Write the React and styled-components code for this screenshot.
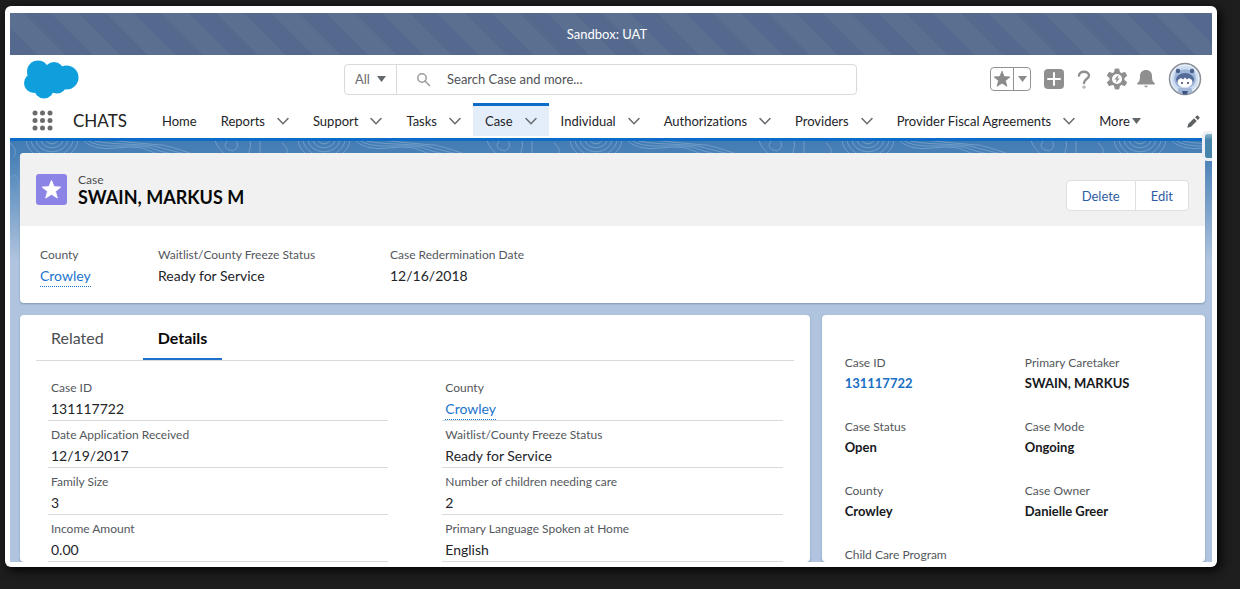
import React from "react";
import styled, { createGlobalStyle, css } from "styled-components";

const GlobalStyle = createGlobalStyle`
  *, *::before, *::after { box-sizing: border-box; }
  body {
    margin: 0;
    background: #1e1e1e;
    color: #16181c;
    font-family: Lato, "Noto Sans", sans-serif;
    font-size: 13px;
    font-variant-ligatures: none;
    line-height: 20px;
  }
  button, input { font: inherit; }
  h1, dl, dd, dt { margin: 0; }
  a { text-decoration: none; }
`;

const Desktop = styled.div`
  height: 100vh;
  padding: 6px 23px 22px 5px;
`;

const Frame = styled.div`
  height: 100%;
  padding: 7px 5px 5px;
  background: #fff;
  border-radius: 6px;
  box-shadow: 3px 3px 12px #000;
`;

const Screen = styled.div`
  position: relative;
  height: 100%;
  display: flex;
  flex-direction: column;
  overflow: hidden;
`;

const Banner = styled.div`
  flex: none;
  height: 42px;
  display: flex;
  align-items: center;
  justify-content: center;
  padding-right: 8px;
  color: #fff;
  background: repeating-linear-gradient(45deg, #54698d 0 19px, #5b6f91 20px 39px);
`;

const Header = styled.header`
  flex: none;
  background: #fff;
  border-bottom: 3px solid #0e6bc8;
`;

const TopRow = styled.div`
  height: 48px;
  display: grid;
  grid-template-columns: 334px minmax(0, 513px) 1fr;
  align-items: center;
`;

const Logo = styled.a`
  display: flex;
  padding-left: 14px;
`;

const SearchBox = styled.form`
  height: 31px;
  display: flex;
  border: 1px solid #d8dadd;
  border-radius: 4px;
`;

const ScopeButton = styled.button`
  width: 52px;
  display: flex;
  align-items: center;
  justify-content: center;
  gap: 7px;
  padding: 0;
  border: 0;
  border-right: 1px solid #d8dadd;
  background: none;
  color: #6b6d70;
`;

const SearchField = styled.label`
  flex: 1;
  display: flex;
  align-items: center;
  gap: 16px;
  padding-left: 19px;
`;

const SearchInput = styled.input`
  flex: 1;
  min-width: 0;
  padding: 0;
  border: 0;
  outline: 0;
  background: none;
  &::placeholder { color: #505256; opacity: 1; }
`;

const Tools = styled.div`
  display: flex;
  align-items: center;
  justify-content: flex-end;
`;

const IconButton = styled.button`
  display: flex;
  align-items: center;
  justify-content: center;
  width: ${(p) => p.$w || 31}px;
  height: 34px;
  padding: 0;
  border: 0;
  background: none;
  color: #8f8f8f;
`;

const SplitButton = styled.div`
  display: flex;
  height: 24px;
  margin-right: 7px;
  border: 1px solid #929292;
  border-radius: 4px;
`;

const SplitPart = styled.button`
  width: ${(p) => p.$w}px;
  display: flex;
  align-items: center;
  justify-content: center;
  padding: 0;
  border: 0;
  background: none;
  color: #8a8a8a;
  & + & { border-left: 1px solid #929292; }
`;

const NavRow = styled.nav`
  height: 35px;
  display: flex;
  align-items: stretch;
  padding: 0 10px 0 21px;
`;

const Launcher = styled.button`
  flex: none;
  width: 24px;
  padding: 0;
  border: 0;
  background: none;
  display: flex;
  align-items: center;
  justify-content: center;
`;

const AppName = styled.span`
  flex: none;
  width: 95px;
  padding-left: 18px;
  font-size: 17px;
  line-height: 36px;
  color: #222;
`;

const TabItem = styled.div`
  display: flex;
  align-items: center;
  gap: 12px;
  padding: 0 12px;
  border-top: 3px solid transparent;
  border-bottom: 2px solid transparent;
  background-clip: padding-box;
  ${(p) => p.$active && css`
    border-top-color: #0e6bc8;
    background-color: #e4eefa;
  `}
`;

const TabLink = styled.a`
  color: #222428;
  white-space: nowrap;
`;

const ChevronButton = styled.button`
  display: flex;
  padding: 0;
  border: 0;
  background: none;
`;

const MoreButton = styled.button`
  display: flex;
  align-items: center;
  gap: 2px;
  padding: 0 12px;
  border: 0;
  background: none;
  color: #222428;
`;

const EditNav = styled.button`
  margin-left: auto;
  display: flex;
  align-items: center;
  padding: 2px 2px 0;
  border: 0;
  background: none;
`;

const Canvas = styled.main`
  position: relative;
  flex: 1;
  min-height: 0;
  display: flex;
  flex-direction: column;
  gap: 12px;
  padding: 12px 7px 0 10px;
  background: linear-gradient(#437cb3 0, #4d84b9 20px, #b0c4df 120px, #b0c4df 100%);
`;

const Topography = styled.svg`
  position: absolute;
  top: 0;
  left: 0;
  width: 100%;
  height: 130px;
`;

const Card = styled.section`
  position: relative;
  background: #fff;
  border-radius: 4px;
  box-shadow: 0 1px 2px #7e94b3;
  overflow: hidden;
`;

const RecordHead = styled.div`
  height: 73px;
  display: flex;
  align-items: center;
  gap: 11px;
  padding: 0 16px;
  background: #f1f1f1;
`;

const RecordIcon = styled.div`
  width: 31px;
  height: 31px;
  display: flex;
  align-items: center;
  justify-content: center;
  border-radius: 3px;
  background: #8b83e6;
`;

const RecordTitle = styled.div`
  flex: 1;
  color: #4c4e52;
  font-size: 12px;
  line-height: 15px;
`;

const Name = styled.h1`
  color: #080808;
  font-size: 18px;
  font-weight: 700;
  line-height: 20px;
`;

const ButtonGroup = styled.div`
  display: flex;
  margin-top: 12px;
  border: 1px solid #dddfe2;
  border-radius: 4px;
  background: #fff;
`;

const ActionButton = styled.button`
  height: 29px;
  padding: 0 15px;
  border: 0;
  background: none;
  color: #2f5da3;
  & + & { border-left: 1px solid #dddfe2; }
`;

const Highlights = styled.dl`
  display: flex;
  padding: 19px 20px 16px;
`;

const Highlight = styled.div`
  width: ${(p) => p.$w}px;
`;

const Label = styled.dt`
  color: #54575c;
  font-size: 12px;
  line-height: 20px;
`;

const Value = styled.dd`
  color: #222428;
  font-size: 14px;
  line-height: 22px;
`;

const RecordLink = styled.a`
  display: inline-block;
  line-height: 20px;
  color: #1a73cc;
  border-bottom: 1px dotted #1a73cc;
`;

const Columns = styled.div`
  flex: 1;
  min-height: 0;
  display: grid;
  grid-template-columns: minmax(0, 789fr) minmax(0, 383fr);
  gap: 12px;
`;

const Tabs = styled.div`
  display: flex;
  height: 46px;
  margin: 0 16px;
  gap: 24px;
  border-bottom: 1px solid #d9dadc;
`;

const Tab = styled.button`
  padding: 2px 15px 0;
  border: 0;
  border-bottom: 2px solid ${(p) => (p.$active ? "#1f70c9" : "transparent")};
  background: none;
  color: ${(p) => (p.$active ? "#080808" : "#4c4e52")};
  font-size: 16px;
  font-weight: ${(p) => (p.$active ? 700 : 400)};
`;

const Details = styled.dl`
  display: grid;
  grid-template-columns: 1fr 1fr;
  column-gap: 54px;
  padding: 13px 27px 0 28px;
`;

const Detail = styled.div`
  padding: 4px 3px 0;
  border-bottom: 1px solid #d9dadc;
`;

const Summary = styled.dl`
  display: grid;
  grid-template-columns: 1fr 1fr;
  row-gap: 24px;
  padding: 38px 0 0 23px;
`;

const SummaryValue = styled.dd`
  color: #16181c;
  font-weight: 700;
  line-height: 20px;
`;

const SummaryLink = styled.a`
  color: #1a6fc4;
`;

const Handle = styled.div`
  position: absolute;
  top: 118px;
  right: 0;
  width: 10px;
  height: 30px;
  border: 3px solid #eceff5;
  border-right: 0;
  border-radius: 5px 0 0 5px;
  background: linear-gradient(#8db7c6, #4784ac 6px);
`;

const Caret = ({ color = "#63666a" }) => (
  <svg width="9" height="6" viewBox="0 0 9 6" aria-hidden="true"><path d="M0 0h9L4.500 6z" fill={color} /></svg>
);

const Chevron = () => (
  <svg width="12" height="8" viewBox="0 0 12 8" fill="none" stroke="#66696d" strokeWidth="1.500" strokeLinecap="round" aria-hidden="true">
    <path d="M1 1.500 6 6.700 11 1.500" />
  </svg>
);

const STAR = "M12 1.500l2.900 7.300 7.700.4-6 5 2 7.600L12 17.500l-6.600 4.300 2-7.600-6-5 7.700-.4z";

const Star = ({ size }) => (
  <svg width={size} height={size} viewBox="0 0 24 24" fill="currentColor" stroke="currentColor" strokeLinejoin="round" aria-hidden="true">
    <path d={STAR} />
  </svg>
);

const Cloud = () => (
  <svg width="55" height="39" viewBox="0 0 55 39" fill="#109fdd" role="img" aria-label="Home">
    <circle cx="14" cy="11.500" r="11" />
    <circle cx="30" cy="12" r="10" />
    <circle cx="42.500" cy="17.500" r="12" />
    <circle cx="10" cy="23" r="10" />
    <circle cx="20" cy="28.500" r="10" />
    <circle cx="33" cy="24" r="9.500" />
    <path d="M10 12h30v14H12z" />
  </svg>
);

const Waffle = () => (
  <svg width="22" height="22" viewBox="0 0 22 22" fill="#6b6b6b" aria-hidden="true">
    {[3, 10.5, 18].map((y) => [3, 10.5, 18].map((x) => <circle key={`${x}-${y}`} cx={x} cy={y} r="2.500" />))}
  </svg>
);

const Gear = () => (
  <svg width="22" height="22" viewBox="0 0 22 22" aria-hidden="true">
    <g fill="currentColor">
      {[0, 60, 120, 180, 240, 300].map((a) => (
        <path key={a} d="M8.500 5 9.200 1h3.600l.7 4z" transform={`rotate(${a} 11 11)`} stroke="currentColor" strokeLinejoin="round" />
      ))}
      <circle cx="11" cy="11" r="7.500" />
    </g>
    <circle cx="11" cy="11" r="5" fill="#fff" />
    <path d="M11.800 7.500 8.300 11.500h2.300l-.6 3.200 3.700-4.300h-2.400l1.300-2.900z" fill="currentColor" />
  </svg>
);

const Avatar = () => (
  <svg width="34" height="34" viewBox="0 0 34 34" aria-hidden="true">
    <circle cx="17" cy="17" r="15.500" fill="#cfdef0" stroke="#8b8f96" strokeWidth="1.500" />
    <circle cx="17" cy="17" r="14" fill="none" stroke="#f0f5fa" />
    <path d="M8 8C8 5.500 11 5.500 12.500 8c3-1 6-1 9 0C23 5.500 26 5.500 26 8l1 5c2 5 0 10-4.500 12.500h-11C7 23 5 18 7 13z" fill="#9db5d8" />
    <rect x="8" y="7" width="4" height="4" rx="1.500" fill="#4a5f88" />
    <rect x="22" y="7" width="4" height="4" rx="1.500" fill="#4a5f88" />
    <ellipse cx="17" cy="17.500" rx="9" ry="6.500" fill="#566c98" />
    <ellipse cx="17" cy="20" rx="7.500" ry="5.500" fill="#fff" />
    <path d="M10 18c1-4 4-5 7-5s6 1 7 5l-3-2-2 1.500-2-2-2 2-2-1.500z" fill="#566c98" />
    <circle cx="14" cy="21" r="1" fill="#2e3f60" />
    <circle cx="20" cy="21" r="1" fill="#2e3f60" />
    <path d="M10.500 26h13l1 4q-7.500 4-15 0z" fill="#a3b8d9" />
    <path d="M14 29h6l-1 3.500h-4z" fill="#3f5683" />
  </svg>
);

const Contours = () => (
  <Topography aria-hidden="true">
    <defs>
      <pattern id="contours" width="272" height="130" patternUnits="userSpaceOnUse">
        <g fill="none" stroke="#6f9dca" strokeWidth="1">
          {[6, 11, 16, 21, 26].map((r) => <ellipse key={r} cx="42" cy="-2" rx={r} ry={r * 0.8} />)}
          {[0, 4, 8, 12].map((d) => (
            <path key={d} d={`M${72 + d} ${-2}q${10 - d / 2} ${12 - d} 34 ${9 - d / 2}t34 3t40 ${6 + d / 2}`} />
          ))}
          <path d="M205 0q4 10 14 16M217 0q-6 8 6 10 8-4 2-12M240 0q2 8-4 16M250 0v16M0 2q8 6 4 14M0 36q10-6 8 10T0 70M0 50q5 0 2 12" />
        </g>
      </pattern>
      <linearGradient id="fade" x1="0" y1="0" x2="0" y2="1">
        <stop offset="0" stopColor="#fff" />
        <stop offset="1" stopColor="#000" />
      </linearGradient>
      <mask id="fadeMask"><rect width="100%" height="130" fill="url(#fade)" /></mask>
    </defs>
    <rect width="100%" height="130" fill="url(#contours)" mask="url(#fadeMask)" />
  </Topography>
);

const NAV = ["Reports", "Support", "Tasks", "Case", "Individual", "Authorizations", "Providers", "Provider Fiscal Agreements"];

const HIGHLIGHTS = [
  { label: "County", value: "Crowley", link: true, w: 118 },
  { label: "Waitlist/County Freeze Status", value: "Ready for Service", w: 232 },
  { label: "Case Redermination Date", value: "12/16/2018", w: 200 },
];

const DETAILS = [
  { label: "Case ID", value: "131117722" },
  { label: "County", value: "Crowley", link: true },
  { label: "Date Application Received", value: "12/19/2017" },
  { label: "Waitlist/County Freeze Status", value: "Ready for Service" },
  { label: "Family Size", value: "3" },
  { label: "Number of children needing care", value: "2" },
  { label: "Income Amount", value: "0.00" },
  { label: "Primary Language Spoken at Home", value: "English" },
];

const SUMMARY = [
  { label: "Case ID", value: "131117722", link: true },
  { label: "Primary Caretaker", value: "SWAIN, MARKUS" },
  { label: "Case Status", value: "Open" },
  { label: "Case Mode", value: "Ongoing" },
  { label: "County", value: "Crowley" },
  { label: "Case Owner", value: "Danielle Greer" },
  { label: "Child Care Program", value: "" },
];

const FieldValue = ({ item }) => (
  <Value>{item.link ? <RecordLink href="#county">{item.value}</RecordLink> : item.value}</Value>
);

export default function App() {
  return (
    <Desktop>
      <GlobalStyle />
      <Frame>
        <Screen>
          <Banner>Sandbox: UAT</Banner>
          <Header>
            <TopRow>
              <Logo href="#home"><Cloud /></Logo>
              <SearchBox role="search">
                <ScopeButton type="button">All <Caret /></ScopeButton>
                <SearchField>
                  <svg width="15" height="15" viewBox="0 0 15 15" fill="none" stroke="#9b9b9b" strokeWidth="1.500" aria-hidden="true">
                    <circle cx="6" cy="6" r="4.200" />
                    <path d="m9 9 4.500 4.500" strokeLinecap="round" />
                  </svg>
                  <SearchInput type="text" aria-label="Search" placeholder="Search Case and more..." />
                </SearchField>
              </SearchBox>
              <Tools>
                <SplitButton>
                  <SplitPart $w={22} aria-label="Favorite"><Star size={18} /></SplitPart>
                  <SplitPart $w={17} aria-label="Favorites list"><Caret color="#8a8a8a" /></SplitPart>
                </SplitButton>
                <IconButton aria-label="Create">
                  <svg width="20" height="20" viewBox="0 0 20 20"><rect width="20" height="20" rx="4" fill="currentColor" /><path d="M10 4v12M4 10h12" stroke="#fff" strokeWidth="2" strokeLinecap="round" /></svg>
                </IconButton>
                <IconButton aria-label="Help" $w={29}>
                  <svg width="14" height="19" viewBox="0 0 14 19" fill="none" stroke="currentColor" strokeWidth="2.400" strokeLinecap="round"><path d="M2 5.500C2 .5 12 .5 12 5.500c0 3.500-5 3.500-5 7.500" /><circle cx="7" cy="17" r=".4" /></svg>
                </IconButton>
                <IconButton aria-label="Setup" $w={37}><Gear /></IconButton>
                <IconButton aria-label="Notifications" $w={22}>
                  <svg width="18" height="18" viewBox="0 0 18 18" fill="currentColor"><path d="M9 0c3.700 0 6 2.500 6 6 0 4.500 1 6 2.500 7 .8.600.5 1.500-.5 1.500H1c-1 0-1.300-.9-.5-1.500C2 12 3 10.500 3 6c0-3.500 2.300-6 6-6zM7 15.800h4Q9 19 7 15.800z" /></svg>
                </IconButton>
                <IconButton aria-label="View profile" $w={55}><Avatar /></IconButton>
              </Tools>
            </TopRow>
            <NavRow>
              <Launcher aria-label="App Launcher"><Waffle /></Launcher>
              <AppName>CHATS</AppName>
              <TabItem><TabLink href="#home">Home</TabLink></TabItem>
              {NAV.map((name) => (
                <TabItem key={name} $active={name === "Case"}>
                  <TabLink href="#tab">{name}</TabLink>
                  <ChevronButton aria-label={`${name} list`}><Chevron /></ChevronButton>
                </TabItem>
              ))}
              <MoreButton>More<Caret /></MoreButton>
              <EditNav aria-label="Edit navigation">
                <svg width="13" height="13" viewBox="0 0 13 13" fill="#5f6265"><path d="M.3 12.700 1.200 9l5.800-5.800 2.800 2.800L4 11.800zM8 2.200 9.600.7c.4-.4 1-.4 1.400 0L12.300 2c.4.4.4 1 0 1.400L10.800 5z" /></svg>
              </EditNav>
            </NavRow>
          </Header>
          <Canvas>
            <Contours />
            <Card>
              <RecordHead>
                <RecordIcon><svg width="21" height="21" viewBox="0 0 24 24" fill="#fff"><path d={STAR} stroke="#fff" strokeLinejoin="round" /></svg></RecordIcon>
                <RecordTitle>Case<Name>SWAIN, MARKUS M</Name></RecordTitle>
                <ButtonGroup>
                  <ActionButton>Delete</ActionButton>
                  <ActionButton>Edit</ActionButton>
                </ButtonGroup>
              </RecordHead>
              <Highlights>
                {HIGHLIGHTS.map((item) => (
                  <Highlight key={item.label} $w={item.w}><Label>{item.label}</Label><FieldValue item={item} /></Highlight>
                ))}
              </Highlights>
            </Card>
            <Columns>
              <Card>
                <Tabs role="tablist">
                  <Tab role="tab" aria-selected="false">Related</Tab>
                  <Tab role="tab" aria-selected="true" $active>Details</Tab>
                </Tabs>
                <Details>
                  {DETAILS.map((item) => (
                    <Detail key={item.label}><Label>{item.label}</Label><FieldValue item={item} /></Detail>
                  ))}
                </Details>
              </Card>
              <Card>
                <Summary>
                  {SUMMARY.map((item) => (
                    <div key={item.label}>
                      <Label>{item.label}</Label>
                      <SummaryValue>{item.link ? <SummaryLink href="#case">{item.value}</SummaryLink> : item.value}</SummaryValue>
                    </div>
                  ))}
                </Summary>
              </Card>
            </Columns>
          </Canvas>
          <Handle />
        </Screen>
      </Frame>
    </Desktop>
  );
}
